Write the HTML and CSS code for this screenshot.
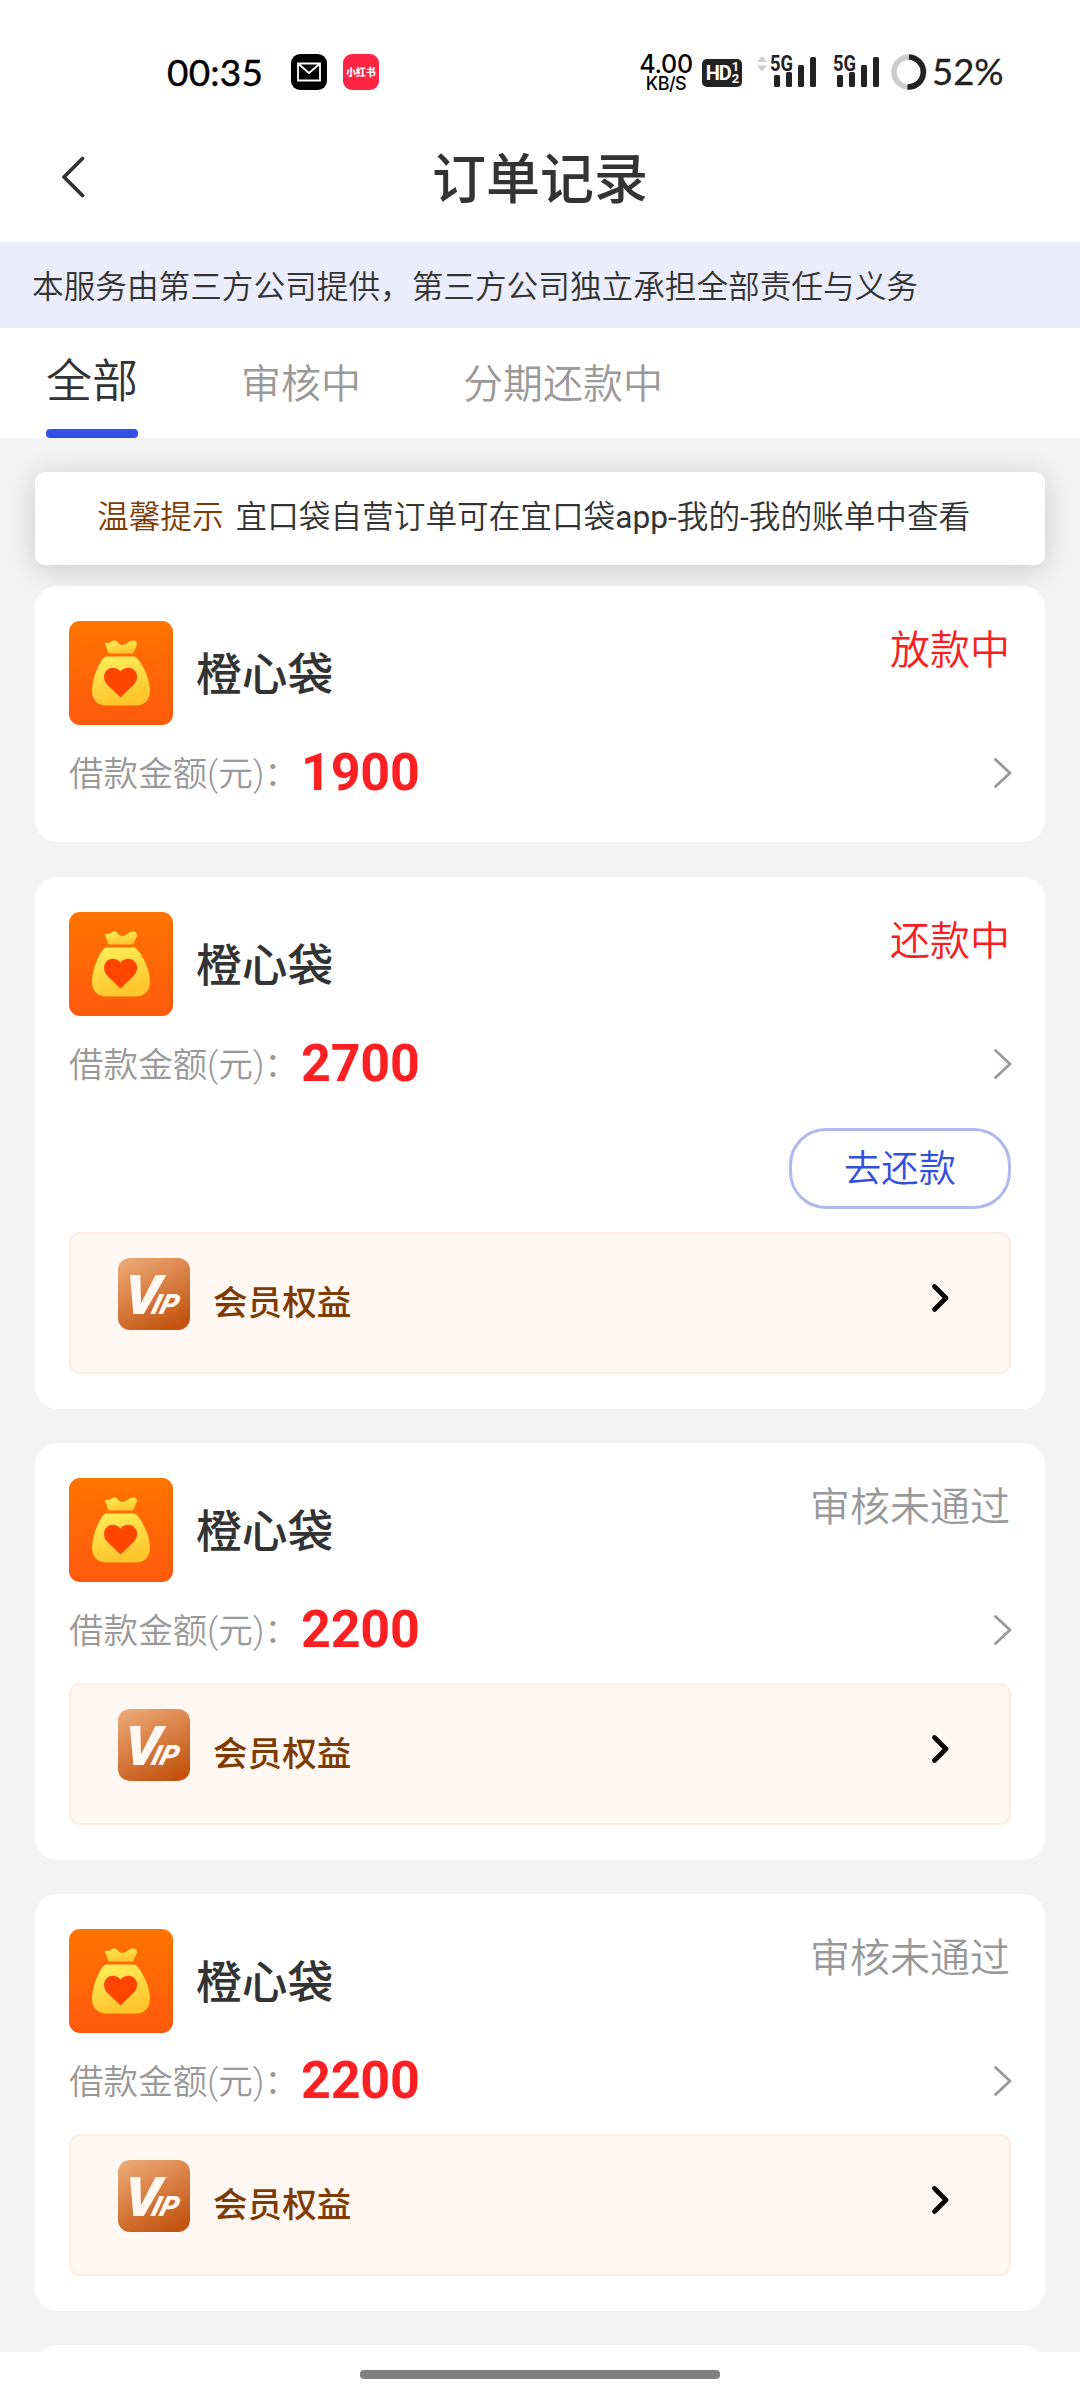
FILE: index.html
```html
<!DOCTYPE html>
<html lang="zh-CN">
<head>
<meta charset="utf-8">
<title>订单记录</title>
<link rel="stylesheet" href="styles.css">
</head>
<body>
<svg class="sprite" aria-hidden="true">
  <defs>
    <linearGradient id="orange" x1="0" y1="0" x2="0" y2="1"><stop offset="0" stop-color="#ff7400"/><stop offset="1" stop-color="#ff5a0d"/></linearGradient>
    <linearGradient id="gold" x1="0" y1="0" x2="0.3" y2="1"><stop offset="0" stop-color="#fff05a"/><stop offset="1" stop-color="#ffc52c"/></linearGradient>
    <linearGradient id="bronze" x1="0.2" y1="0" x2="0.7" y2="1"><stop offset="0" stop-color="#eba673"/><stop offset="1" stop-color="#c3530f"/></linearGradient>
  </defs>
  <symbol id="bag" viewBox="0 0 104 104">
    <rect width="104" height="104" rx="11" fill="url(#orange)"/>
    <path d="M39.500 32.500L36.500 24C35 22 37 21.500 40 22C42 21.500 43 19 46 19.500C49 20 49.500 24 53 24C58 24 59 19.500 64 19.500C68 19.500 69 23 67 26C66 28 65.500 30 64 32.500Z" fill="url(#gold)"/>
    <path d="M37 35.500H65C69.500 35.500 81 55 81 70C81 79 75 84.500 67 84.500H37C29 84.500 23 79 23 70C23 55 33 35.500 37 35.500Z" fill="url(#gold)"/>
    <path d="M51.500 76.500L38.500 64C34.500 60 34 54 37 50C41 45.500 47.500 46 51.500 50.500C55.500 46 62 45.500 66 50C69.500 54 68.500 60 64.500 64Z" fill="#ff4500"/>
  </symbol>
</svg>

<div class="statusbar">
  <span class="clock">00:35</span>
  <svg class="mail" viewBox="0 0 36 36"><rect width="36" height="36" rx="9"/><path d="M7 9.500H29V26.500H7ZM7.500 10L18 19L28.500 10" fill="none" stroke="#fff" stroke-width="1.800"/></svg>
  <span class="redapp">小红书</span>
  <span class="speed"><b>4.00</b><i>KB/S</i></span>
  <span class="hd">HD<small><em>1</em><em>2</em></small></span>
  <svg class="updown" viewBox="0 0 10 16"><path d="M0 6L5 0L10 6ZM0 9.500L5 15.500L10 9.500Z" fill="#ccc"/></svg>
  <svg class="signal" viewBox="0 0 46 34"><rect x="4" y="21" width="6" height="12" rx="1.500"/><rect x="16" y="18" width="6" height="15" rx="1.500"/><rect x="28" y="11" width="6" height="22" rx="1.500"/><rect x="40" y="3" width="6" height="30" rx="1.500"/><text x="0" y="17" class="net" textLength="23" lengthAdjust="spacingAndGlyphs">5G</text></svg>
  <svg class="signal second" viewBox="0 0 46 34"><rect x="4" y="21" width="6" height="12" rx="1.500"/><rect x="16" y="18" width="6" height="15" rx="1.500"/><rect x="28" y="11" width="6" height="22" rx="1.500"/><rect x="40" y="3" width="6" height="30" rx="1.500"/><text x="0" y="17" class="net" textLength="23" lengthAdjust="spacingAndGlyphs">5G</text></svg>
  <svg class="ring" viewBox="0 0 36 36"><circle cx="18" cy="18" r="15" fill="none" stroke="#ccc" stroke-width="5.500"/><path d="M18 3A15 15 0 0 1 16.500 33" fill="none" stroke="#222" stroke-width="5.500"/></svg>
  <span class="percent">52%</span>
</div>

<header class="header">
  <svg class="back" viewBox="0 0 24 42"><path d="M21.500 2.500L3 21L21.500 39.500" fill="none" stroke="#333" stroke-width="3.800" stroke-linecap="round" stroke-linejoin="round"/></svg>
  <h1>订单记录</h1>
</header>

<div class="banner">本服务由第三方公司提供，第三方公司独立承担全部责任与义务</div>

<nav class="tabs">
  <a class="tab active">全部</a>
  <a class="tab">审核中</a>
  <a class="tab">分期还款中</a>
</nav>

<main class="list">
  <div class="notice"><span>温馨提示</span>宜口袋自营订单可在宜口袋<b>app-</b>我的<b>-</b>我的账单中查看</div>

  <section class="card first">
    <div class="top"><svg class="logo"><use href="#bag"/></svg><h2>橙心袋</h2><span class="state red">放款中</span></div>
    <div class="amount"><span>借款金额(元)：</span><strong>1900</strong><svg class="more" viewBox="0 0 18 30"><path d="M1.500 1.500L16 15L1.500 28.500"/></svg></div>
  </section>

  <section class="card">
    <div class="top"><svg class="logo"><use href="#bag"/></svg><h2>橙心袋</h2><span class="state red">还款中</span></div>
    <div class="amount"><span>借款金额(元)：</span><strong>2700</strong><svg class="more" viewBox="0 0 18 30"><path d="M1.500 1.500L16 15L1.500 28.500"/></svg></div>
    <button class="repay">去还款</button>
    <div class="member"><svg class="vip" viewBox="0 0 72 72"><rect width="72" height="72" rx="12" fill="url(#bronze)"/><text transform="translate(5 56) skewX(-5)" class="vip-v" textLength="36" lengthAdjust="spacingAndGlyphs">V</text><text transform="translate(32 56) skewX(-16)" class="vip-ip" textLength="26" lengthAdjust="spacingAndGlyphs">IP</text></svg><span>会员权益</span><svg class="go" viewBox="0 0 17 28"><path d="M2.500 2.500L14 14L2.500 25.500"/></svg></div>
  </section>

  <section class="card">
    <div class="top"><svg class="logo"><use href="#bag"/></svg><h2>橙心袋</h2><span class="state">审核未通过</span></div>
    <div class="amount"><span>借款金额(元)：</span><strong>2200</strong><svg class="more" viewBox="0 0 18 30"><path d="M1.500 1.500L16 15L1.500 28.500"/></svg></div>
    <div class="member"><svg class="vip" viewBox="0 0 72 72"><rect width="72" height="72" rx="12" fill="url(#bronze)"/><text transform="translate(5 56) skewX(-5)" class="vip-v" textLength="36" lengthAdjust="spacingAndGlyphs">V</text><text transform="translate(32 56) skewX(-16)" class="vip-ip" textLength="26" lengthAdjust="spacingAndGlyphs">IP</text></svg><span>会员权益</span><svg class="go" viewBox="0 0 17 28"><path d="M2.500 2.500L14 14L2.500 25.500"/></svg></div>
  </section>

  <section class="card">
    <div class="top"><svg class="logo"><use href="#bag"/></svg><h2>橙心袋</h2><span class="state">审核未通过</span></div>
    <div class="amount"><span>借款金额(元)：</span><strong>2200</strong><svg class="more" viewBox="0 0 18 30"><path d="M1.500 1.500L16 15L1.500 28.500"/></svg></div>
    <div class="member"><svg class="vip" viewBox="0 0 72 72"><rect width="72" height="72" rx="12" fill="url(#bronze)"/><text transform="translate(5 56) skewX(-5)" class="vip-v" textLength="36" lengthAdjust="spacingAndGlyphs">V</text><text transform="translate(32 56) skewX(-16)" class="vip-ip" textLength="26" lengthAdjust="spacingAndGlyphs">IP</text></svg><span>会员权益</span><svg class="go" viewBox="0 0 17 28"><path d="M2.500 2.500L14 14L2.500 25.500"/></svg></div>
  </section>

  <section class="card next"></section>
</main>

<footer class="gesture"><span></span></footer>
</body>
</html>
```
FILE: styles.css
```css
* { box-sizing: border-box; margin: 0; padding: 0; }
html { overflow: hidden; }
body {
  width: 1080px;
  height: 2400px;
  display: flex;
  flex-direction: column;
  overflow: hidden;
  background: #fff;
  color: #333;
  font-family: Roboto, "Noto Sans CJK SC", sans-serif;
  font-weight: 350;
  white-space: nowrap;
}
svg { display: block; flex: none; }
.sprite { width: 0; height: 0; position: absolute; }

.statusbar {
  height: 142px;
  padding: 54px 76px 0 167px;
  display: flex;
  align-items: flex-start;
  color: #000;
}
.clock { width: 124px; font: 37px/35px Lato, sans-serif; letter-spacing: 0.200px; -webkit-text-stroke: 0.400px #000; }
.mail { width: 36px; height: 36px; }
.redapp {
  width: 36px; height: 36px; margin-left: 16px;
  border-radius: 9px; background: #ff2442; color: #fff;
  font: 900 9.800px/36px "Noto Sans CJK SC", sans-serif; text-align: center;
}
.speed { width: 54px; margin-left: 260px; text-align: center; }
.speed b { display: block; font: 500 25px/20px Inter, sans-serif; letter-spacing: -0.300px; }
.speed i { display: block; font: 500 18px/19px Inter, sans-serif; letter-spacing: -0.500px; }
.hd {
  width: 40px; height: 28px; margin: 5px 0 0 9px;
  display: flex; justify-content: center; align-items: center; gap: 1px;
  border-radius: 5px; background: #222; color: #fff;
  font: 700 20px/28px Roboto, sans-serif; letter-spacing: -1px;
}
.hd small { font-size: 13px; line-height: 12px; }
.hd em { display: block; font-style: normal; }
.updown { width: 10px; height: 16px; margin: 2px 0 0 15px; }
.signal { width: 46px; height: 34px; margin-left: 3px; fill: #222; overflow: visible; }
.signal.second { margin-left: 17px; }
.net { font: 700 22px Roboto, sans-serif; stroke: #fff; stroke-width: 1.500px; paint-order: stroke; }
.ring { width: 36px; height: 36px; margin-left: 12px; }
.percent { margin-left: 5px; color: #222; font: 36.500px/35px Lato, sans-serif; -webkit-text-stroke: 0.300px #222; }

.header {
  height: 100px;
  padding: 0 61px;
  display: grid;
  grid-template-columns: 24px 1fr 24px;
  align-items: start;
}
.back { width: 24px; height: 42px; margin-top: 14px; }
h1 { font-size: 54px; font-weight: 500; line-height: 78px; text-align: center; }

.banner { height: 86px; padding-left: 32px; background: #ebedfd; font-size: 31.650px; line-height: 91px; }

.tabs { height: 110px; padding-left: 46px; display: flex; }
.tab { margin-right: 103px; color: #999; font-size: 40px; line-height: 113px; }
.tab + .tab { margin-right: 102px; }
.tab.active {
  position: relative; width: 92px; color: #333;
  font-size: 46px; line-height: 107px;
}
.tab.active::after {
  content: ""; position: absolute; left: 0; bottom: 0;
  width: 92px; height: 9px; border-radius: 4px; background: #334fe5;
}

.list {
  height: 1914px; padding: 34px 35px 0;
  display: flex; flex-direction: column; gap: 34.300px;
  overflow: hidden; background: #f3f3f3;
}
.notice {
  flex: none; height: 93px; padding-left: 62px;
  border-radius: 10px; background: #fff; box-shadow: 0 4px 30px rgba(0, 0, 0, .18);
  font-size: 31.650px; line-height: 92px;
}
.notice span { margin-right: 12px; color: #7d3b02; }
.notice b { font-weight: 400; }

.card {
  position: relative; flex: none; padding: 35px 34px;
  display: flex; flex-direction: column;
  border-radius: 22px; background: #fff;
}
.card.first { height: 256.300px; margin-top: -13.300px; }
.card.next { height: 200px; }
.top { flex: none; height: 104px; display: flex; }
.logo { width: 104px; height: 104px; }
h2 { margin-left: 23px; font-size: 45.800px; font-weight: 500; line-height: 110px; }
.state { margin-left: auto; margin-right: 1px; color: #999; font-size: 40px; line-height: 59px; }
.red { color: #f7201f; }
.amount { flex: none; height: 101px; padding-bottom: 5px; display: flex; align-items: center; }
.amount span { width: 232px; padding-bottom: 4px; color: #999; font-size: 34.600px; }
.amount strong { color: #fd2023; font-size: 52px; font-weight: 700; line-height: 60px; letter-spacing: -0.200px; }
.more { width: 18px; height: 30px; margin: 0 -1px 0 auto; }
.more path { fill: none; stroke: #999; stroke-width: 2.800; stroke-linecap: round; stroke-linejoin: round; }
.repay {
  align-self: flex-end; width: 222px; height: 81px; margin: 11px 0 23px; padding-bottom: 4px;
  border: 3px solid #b0b8ef; border-radius: 37px; background: #fff;
  color: #334fdf; font: 350 37.300px/70px "Noto Sans CJK SC", sans-serif;
}
.member {
  height: 142px; padding: 24px 60px 0 47px;
  display: flex; align-items: flex-start;
  border: 2px solid #fdece1; border-radius: 11px; background: #fff7f1;
}
.vip { width: 72px; height: 72px; }
.vip-v { font: italic 900 55px Roboto, sans-serif; fill: #fff8f2; }
.vip-ip { font: italic 900 28px Roboto, sans-serif; fill: #fff8f2; }
.member span { margin-left: 23px; color: #7d3b02; font-size: 34.600px; font-weight: 500; line-height: 91px; }
.go { width: 17px; height: 28px; margin: 26px 0 0 auto; }
.go path { fill: none; stroke: #000; stroke-width: 4.600; stroke-linecap: round; stroke-linejoin: round; }

.gesture { height: 48px; padding-top: 18px; display: flex; justify-content: center; background: #fff; }
.gesture span { width: 360px; height: 9px; border-radius: 4px; background: #808080; }
```
